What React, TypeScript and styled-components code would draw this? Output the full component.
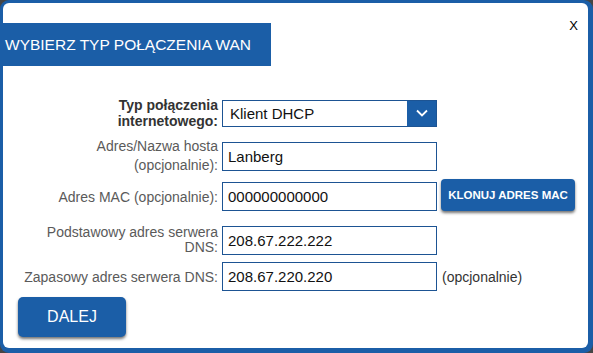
import React from "react";
import styled, { createGlobalStyle } from "styled-components";

const Global = createGlobalStyle`
  html, body { margin: 0; padding: 0; background: #454545; }
  body { width: 593px; height: 353px; overflow: hidden; font-family: "Liberation Sans", Arial, sans-serif; }
`;

const Frame = styled.div`
  width: 593px;
  height: 353px;
  box-sizing: border-box;
  background: #1b5ea7;
  border-radius: 9px;
  padding: 3px 5px 5px 3px;
`;

const Panel = styled.div`
  position: relative;
  height: 100%;
  background: #ffffff;
  border-radius: 6px;
  box-sizing: border-box;
  padding-top: 20px;
`;

const Close = styled.div`
  position: absolute;
  top: 13px;
  right: 10px;
  font-size: 13px;
  color: #000;
  font-family: "Liberation Sans", Arial, sans-serif;
  line-height: 20px;
`;

const TitleBar = styled.div`
  margin-left: -3px;
  width: 271px;
  height: 43px;
  background: #1b5ea7;
  color: #fff;
  font-size: 15.5px;
  display: flex;
  align-items: center;
  padding-left: 5px;
  box-sizing: border-box;
  white-space: nowrap;
`;

const Form = styled.div`
  display: flex;
  flex-direction: column;
  margin-top: 31px;
`;

const Row = styled.div<{ $mt: number }>`
  display: flex;
  align-items: center;
  margin-top: ${(p) => p.$mt}px;
`;

const Label = styled.div<{ $bold?: boolean; $lh?: number }>`
  width: 215px;
  text-align: right;
  font-size: 14px;
  line-height: ${(p) => p.$lh ?? 16}px;
  color: ${(p) => (p.$bold ? "#333" : "#5a5a5a")};
  font-weight: ${(p) => (p.$bold ? 700 : 400)};
  white-space: nowrap;
  margin-right: 4px;
`;

const Field = styled.div`
  width: 215px;
  height: 29px;
  box-sizing: border-box;
  border: 1px solid #1d5493;
  font-size: 15px;
  color: #111;
  display: flex;
  align-items: center;
  padding-left: 5px;
`;

const Select = styled.div`
  width: 215px;
  height: 27px;
  box-sizing: border-box;
  border: 1px solid #1d5493;
  display: flex;
  align-items: stretch;
  font-size: 15px;
  color: #111;
`;

const SelectText = styled.div`
  flex: 1;
  display: flex;
  align-items: center;
  padding-left: 7px;
`;

const SelectArrow = styled.div`
  width: 29px;
  background: #1b5ea7;
  display: flex;
  align-items: center;
  justify-content: center;
`;

const Note = styled.div`
  margin-left: 5px;
  font-size: 14px;
  color: #333;
`;

const CloneButton = styled.div`
  margin-left: 4px;
  width: 134px;
  height: 32px;
  border-radius: 4px;
  background: #1b5ea7;
  color: #fff;
  font-weight: 700;
  font-size: 11.5px;
  display: flex;
  align-items: center;
  justify-content: center;
  box-shadow: 0 2px 3px rgba(0, 0, 0, 0.55);
  margin-top: -4px;
`;

const NextButton = styled.div`
  margin: 6px 0 0 15px;
  width: 108px;
  height: 40px;
  border-radius: 5px;
  background: #1b5ea7;
  color: #fff;
  font-size: 16px;
  display: flex;
  align-items: center;
  justify-content: center;
  box-shadow: 0 2px 3px rgba(0, 0, 0, 0.55);
`;

export default function App() {
  return (
    <>
      <Global />
      <Frame>
        <Panel>
          <Close>X</Close>
          <TitleBar>WYBIERZ TYP POŁĄCZENIA WAN</TitleBar>
          <Form>
            <Row $mt={0}>
              <Label $bold $lh={16}>
                Typ połączenia
                <br />
                internetowego:
              </Label>
              <Select>
                <SelectText>Klient DHCP</SelectText>
                <SelectArrow>
                  <svg width="12" height="8" viewBox="0 0 12 8">
                    <path d="M1 1.5 L6 6.5 L11 1.5" fill="none" stroke="#fff" strokeWidth="1.8" />
                  </svg>
                </SelectArrow>
              </Select>
            </Row>
            <Row $mt={8}>
              <Label $lh={19}>
                Adres/Nazwa hosta
                <br />
                (opcjonalnie):
              </Label>
              <Field>Lanberg</Field>
            </Row>
            <Row $mt={7}>
              <Label>Adres MAC (opcjonalnie):</Label>
              <Field>000000000000</Field>
              <CloneButton>KLONUJ ADRES MAC</CloneButton>
            </Row>
            <Row $mt={14}>
              <Label $lh={15}>
                Podstawowy adres serwera
                <br />
                DNS:
              </Label>
              <Field>208.67.222.222</Field>
            </Row>
            <Row $mt={7}>
              <Label>Zapasowy adres serwera DNS:</Label>
              <Field>208.67.220.220</Field>
              <Note>(opcjonalnie)</Note>
            </Row>
            <NextButton>DALEJ</NextButton>
          </Form>
        </Panel>
      </Frame>
    </>
  );
}
